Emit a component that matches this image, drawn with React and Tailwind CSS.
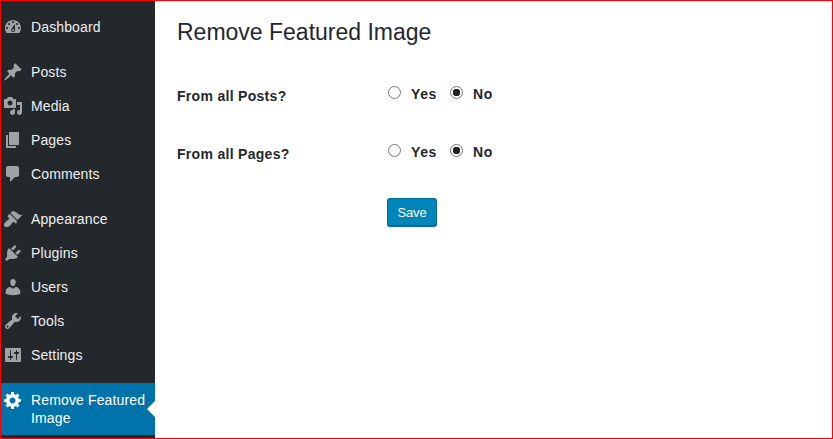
import React from "react";

const icons = {
  dashboard:
    "M3.76 16h12.48c1.1-1.37 1.76-3.11 1.76-5 0-4.42-3.58-8-8-8s-8 3.58-8 8c0 1.89.66 3.63 1.76 5zM10 4c.55 0 1 .45 1 1s-.45 1-1 1-1-.45-1-1 .45-1 1-1zM6 6c.55 0 1 .45 1 1s-.45 1-1 1-1-.45-1-1 .45-1 1-1zm8 0c.55 0 1 .45 1 1s-.45 1-1 1-1-.45-1-1 .45-1 1-1zm-5.37 5.55L12 7v6c0 1.1-.9 2-2 2s-2-.9-2-2c0-.57.24-1.08.63-1.45zM4 10c.55 0 1 .45 1 1s-.45 1-1 1-1-.45-1-1 .45-1 1-1zm12 0c.55 0 1 .45 1 1s-.45 1-1 1-1-.45-1-1 .45-1 1-1zm-5 3c0-.55-.45-1-1-1s-1 .45-1 1 .45 1 1 1 1-.45 1-1z",
  posts:
    "M10.44 3.02l1.82-1.82 6.36 6.35-1.83 1.82c-1.05-.68-2.48-.57-3.41.36l-.75.75c-.92.93-1.04 2.35-.35 3.41l-1.83 1.82-2.41-2.41-2.8 2.79c-.42.42-3.38 2.71-3.8 2.29s1.86-3.39 2.28-3.81l2.79-2.79L4.1 9.36l1.83-1.82c1.05.69 2.48.57 3.4-.36l.75-.75c.93-.92 1.05-2.35.36-3.41z",
  media:
    "M13 11V4c0-.55-.45-1-1-1h-1.67L9 1H5L3.67 3H2c-.55 0-1 .45-1 1v7c0 .55.45 1 1 1h10c.55 0 1-.45 1-1zM7 4.5c1.38 0 2.5 1.12 2.5 2.5S8.38 9.5 7 9.5 4.5 8.38 4.5 7 5.62 4.5 7 4.5zM14 6h5v10.5c0 1.38-1.12 2.5-2.5 2.5S14 17.88 14 16.5s1.12-2.5 2.5-2.5c.17 0 .34.02.5.05V9h-3V6zm-4 8.05V13h2v3.5c0 1.38-1.12 2.5-2.5 2.5S7 17.88 7 16.5 8.12 14 9.5 14c.17 0 .34.02.5.05z",
  pages: "M6 15V2h10v13H6zm-1 1h8v2H3V5h2v11z",
  comments:
    "M5 2h9c1.1 0 2 .9 2 2v7c0 1.1-.9 2-2 2h-2l-5 5v-5H5c-1.1 0-2-.9-2-2V4c0-1.1.9-2 2-2z",
  appearance:
    "M14.48 11.06L7.41 3.99l1.5-1.5c.5-.56 2.3-.47 3.51.32 1.21.8 1.43 1.28 2.91 2.1 1.18.64 2.45 1.26 4.45.85zm-.71.71L6.7 4.7 4.93 6.47c-.39.39-.39 1.02 0 1.41l1.06 1.06c.39.39.39 1.03 0 1.42-.6.6-1.43 1.11-2.21 1.69-.35.26-.7.53-1.01.84C1.43 13.23.28 15.95 1.73 17.41s4.18.31 5.52-1.03c.31-.31.59-.65.85-1 .58-.78 1.09-1.61 1.69-2.21.39-.39 1.02-.39 1.41 0l1.06 1.06c.39.39 1.02.39 1.41 0z",
  plugins:
    "M13.11 4.36L9.87 7.6 8 5.73l3.24-3.24c.35-.34 1.05-.2 1.56.32.52.51.66 1.21.31 1.55zm-8 1.77l.91-1.12 9.01 9.01-1.19.84c-.71.71-2.63 1.16-3.82 1.16H6.14L4.9 17.26c-.59.59-1.54.59-2.12 0-.59-.58-.59-1.53 0-2.12l1.24-1.24v-3.88c0-1.13.4-3.19 1.09-3.89zm7.26 3.97l3.24-3.24c.34-.35 1.04-.21 1.55.31.52.51.66 1.21.31 1.55l-3.24 3.25z",
  users:
    "M10 9.25c-2.27 0-2.73-3.44-2.73-3.44C7 4.02 7.82 2 9.97 2c2.16 0 2.98 2.02 2.71 3.81 0 0-.41 3.44-2.68 3.44zm0 2.57L12.72 10c2.39 0 4.52 2.33 4.52 4.53v2.49s-3.65 1.13-7.24 1.13c-3.65 0-7.24-1.13-7.24-1.13v-2.49c0-2.25 1.94-4.48 4.47-4.48z",
  tools:
    "M16.68 9.77c-1.34 1.34-3.3 1.67-4.95.99l-5.41 6.52c-.99.99-2.59.99-3.58 0s-.99-2.59 0-3.57l6.52-5.42c-.68-1.65-.35-3.61.99-4.95 1.28-1.28 3.12-1.62 4.72-1.06l-2.89 2.89 2.82 2.82 2.86-2.87c.53 1.58.18 3.39-1.08 4.65zM3.81 16.21c.4.39 1.04.39 1.43 0 .4-.4.4-1.04 0-1.43-.39-.4-1.03-.4-1.43 0-.39.39-.39 1.03 0 1.43z",
  settings:
    "M18 16V4c0-.55-.45-1-1-1H3c-.55 0-1 .45-1 1v12c0 .55.45 1 1 1h14c.55 0 1-.45 1-1zM8 11h1c.55 0 1 .45 1 1s-.45 1-1 1H8v1.5c0 .28-.22.5-.5.5s-.5-.22-.5-.5V13H6c-.55 0-1-.45-1-1s.45-1 1-1h1V5.5c0-.28.22-.5.5-.5s.5.22.5.5V11zm5-2h-1c-.55 0-1-.45-1-1s.45-1 1-1h1V5.5c0-.28.22-.5.5-.5s.5.22.5.5V7h1c.55 0 1 .45 1 1s-.45 1-1 1h-1v5.5c0 .28-.22.5-.5.5s-.5-.22-.5-.5V9z",
  generic:
    "M18 12h-2.18c-.17.7-.44 1.35-.81 1.93l1.54 1.54-2.1 2.1-1.54-1.54c-.58.36-1.23.63-1.91.79V19H8v-2.18c-.68-.16-1.33-.43-1.91-.79l-1.54 1.54-2.12-2.12 1.54-1.54c-.36-.58-.63-1.23-.79-1.91H1V9.03h2.17c.16-.7.44-1.35.8-1.94L2.43 5.55l2.1-2.1 1.54 1.54c.58-.37 1.24-.64 1.93-.81V2h3v2.18c.68.16 1.33.43 1.91.79l1.54-1.54 2.12 2.12-1.54 1.54c.36.59.64 1.24.8 1.94H18V12zm-8.5 1.5c1.66 0 3-1.34 3-3s-1.34-3-3-3-3 1.34-3 3 1.34 3 3 3z",
};

function Icon({ name, className }) {
  return (
    <svg viewBox="0 0 20 20" className={"w-5 h-5 shrink-0 " + className} fill="currentColor">
      <path d={icons[name]} fillRule="evenodd" />
    </svg>
  );
}

function MenuItem({ icon, label }) {
  return (
    <div className="h-[34px] flex items-center pl-[2px] text-[14px] tracking-[0.12px] text-[#eeeeee]">
      <Icon name={icon} className="text-[#9ea3a8]" />
      <span className="ml-[8px]">{label}</span>
    </div>
  );
}

function Choice({ name, label, checked }) {
  return (
    <label className="flex items-center gap-[10px]">
      <input
        type="radio"
        name={name}
        defaultChecked={checked}
        className="appearance-none w-[13px] h-[13px] -mt-[5px] rounded-full border border-[#767676] bg-white checked:bg-[radial-gradient(circle,#222222_0_3.5px,#ffffff_4px)]"
      />
      <span>{label}</span>
    </label>
  );
}

function OptionRow({ label, name }) {
  return (
    <div className="flex items-center h-[20px] font-bold text-[14px] tracking-[0.3px] text-[#23282d]">
      <div className="w-[211px] pt-[3px]">{label}</div>
      <div className="flex items-center gap-[13px] tracking-[0.6px] -mt-[1px]">
        <Choice name={name} label="Yes" />
        <Choice name={name} label="No" checked />
      </div>
    </div>
  );
}

export default function App() {
  return (
    <div className="w-[833px] h-[439px] flex border border-[#ff0000] bg-white font-['Liberation_Sans',Arial,sans-serif] overflow-hidden">
      <aside className="w-[154px] shrink-0 bg-[#23282d] pt-[9px]">
        <MenuItem icon="dashboard" label="Dashboard" />
        <div className="h-[11px]" />
        <MenuItem icon="posts" label="Posts" />
        <MenuItem icon="media" label="Media" />
        <MenuItem icon="pages" label="Pages" />
        <MenuItem icon="comments" label="Comments" />
        <div className="h-[11px]" />
        <MenuItem icon="appearance" label="Appearance" />
        <MenuItem icon="plugins" label="Plugins" />
        <MenuItem icon="users" label="Users" />
        <MenuItem icon="tools" label="Tools" />
        <MenuItem icon="settings" label="Settings" />
        <div className="h-[11px]" />
        <div className="relative h-[52px] flex pl-[2px] pt-[7px] bg-[#0073aa] text-white text-[14px] tracking-[0.14px] leading-[18px]">
          <Icon name="generic" className="text-white" />
          <span className="ml-[8px] w-[120px] pt-[1px]">Remove Featured Image</span>
          <span className="absolute right-0 top-[18px] border-y-[8px] border-r-[8px] border-y-transparent border-r-white" />
        </div>
      </aside>
      <main className="flex-1 pl-[22px] pt-[17px] text-[#23282d]">
        <h1 className="text-[23px] leading-[29px]">Remove Featured Image</h1>
        <div className="mt-[38px]">
          <OptionRow label="From all Posts?" name="posts" />
        </div>
        <div className="mt-[38px]">
          <OptionRow label="From all Pages?" name="pages" />
        </div>
        <button className="block mt-[35px] ml-[210px] w-[50px] h-[29px] pt-[1px] rounded-[3px] bg-[#0085ba] border border-[#006799] border-b-2 text-white text-[13px] tracking-[-0.2px]">
          Save
        </button>
      </main>
    </div>
  );
}
